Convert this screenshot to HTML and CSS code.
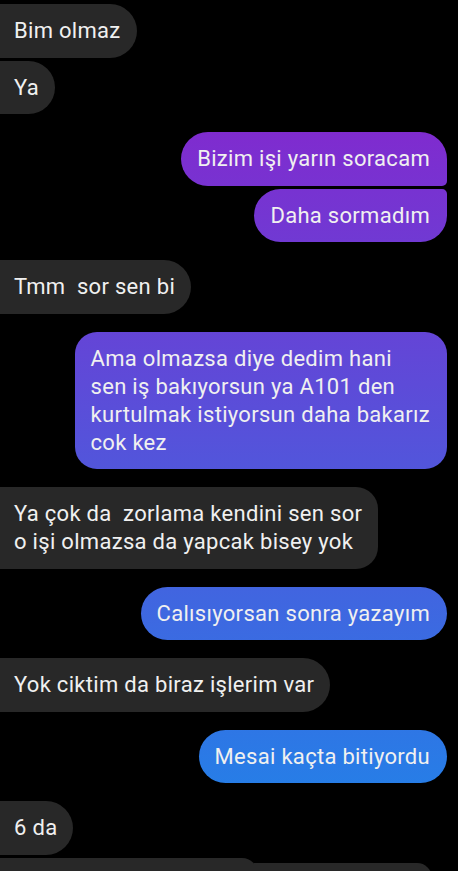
FILE: index.html
```html
<!DOCTYPE html>
<html lang="tr">
<head>
    <meta charset="UTF-8">
    <meta name="viewport" content="width=device-width, initial-scale=1.0">
    <title>Mesajlar</title>
    <link rel="stylesheet" href="styles.css">
</head>
<body>
    <div class="chat">
        <div class="group">
            <div class="msg in first">Bim olmaz</div>
            <div class="msg in last">Ya</div>
        </div>

        <div class="group">
            <div class="msg out first">Bizim işi yarın soracam</div>
            <div class="msg out last">Daha sormadım</div>
        </div>

        <div class="group">
            <div class="msg in">Tmm&nbsp; sor sen bi</div>
        </div>

        <div class="group">
            <div class="msg out wide">Ama olmazsa diye dedim hani<br>sen iş bakıyorsun ya A101 den<br>kurtulmak istiyorsun daha bakarız<br>cok kez</div>
        </div>

        <div class="group">
            <div class="msg in wide">Ya çok da&nbsp; zorlama kendini sen sor<br>o işi olmazsa da yapcak bisey yok</div>
        </div>

        <div class="group">
            <div class="msg out">Calısıyorsan sonra yazayım</div>
        </div>

        <div class="group">
            <div class="msg in">Yok ciktim da biraz işlerim var</div>
        </div>

        <div class="group">
            <div class="msg out">Mesai kaçta bitiyordu</div>
        </div>

        <div class="group">
            <div class="msg in first">6 da</div>
            <!-- next message, cut off by the screen edge -->
            <div class="cut">
                <div class="cut-a"></div>
                <div class="cut-b"></div>
            </div>
        </div>
    </div>
</body>
</html>
```

FILE: styles.css
```css
html, body {
    margin: 0;
    background-color: #000;
}
body {
    font-family: Roboto, "Noto Sans", sans-serif;
    font-size: 22px;
    letter-spacing: 0.3px;
    overflow: hidden;
    height: 871px;
}
.chat {
    display: flex;
    flex-direction: column;
    gap: 18px;
    padding-top: 4px;
}
.group {
    display: flex;
    flex-direction: column;
    gap: 3px;
}
.msg {
    line-height: 28px;
    padding: 13px 16px 12.5px 14px;
    color: #f0f0f0;
    white-space: nowrap;
}
.msg.in {
    align-self: flex-start;
    background-color: #282828;
    border-radius: 0 27px 27px 0;
}
.msg.out {
    align-self: flex-end;
    margin-right: 11px;
    padding-left: 16px;
    padding-right: 17px;
    border-radius: 27px;
    background: linear-gradient(180deg, #911bca 0%, #1b88ea 100%) fixed;
}
.msg.out.first { border-radius: 27px 27px 5px 27px; }
.msg.out.last { border-radius: 27px 5px 27px 27px; }
.msg.out.wide {
    border-radius: 22px;
}
.msg.in.wide {
    border-radius: 0 22px 22px 0;
}
.cut {
    display: flex;
    align-items: flex-start;
    height: 20px;
}
.cut-a {
    width: 258px;
    height: 20px;
    background-color: #282828;
    border-radius: 0 16px 0 0;
}
.cut-b {
    width: 178px;
    height: 15px;
    margin-top: 5px;
    margin-left: -4px;
    background-color: #282828;
    border-radius: 0 16px 0 0;
}
```
